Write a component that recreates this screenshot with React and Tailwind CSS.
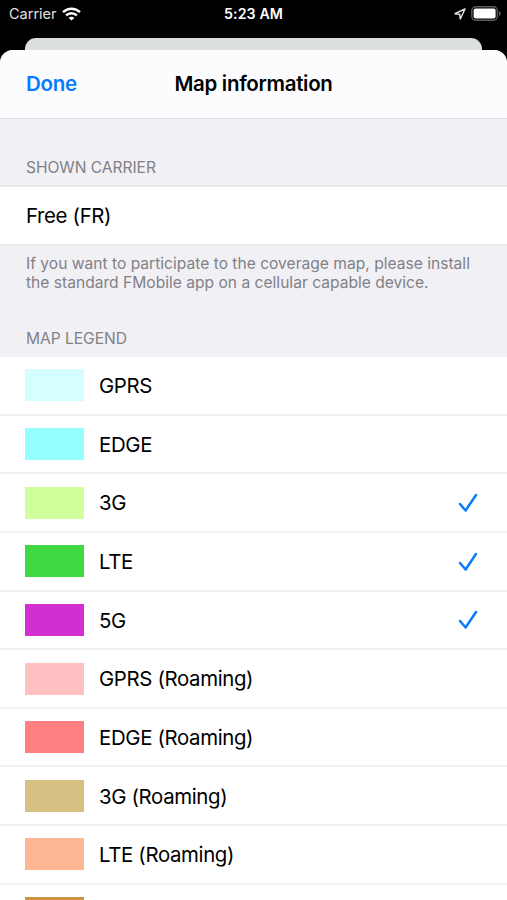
const legend = [
  { label: "GPRS", swatch: "bg-[#d5ffff]" },
  { label: "EDGE", swatch: "bg-[#96ffff]" },
  { label: "3G", swatch: "bg-[#d0ff9c]", checked: true },
  { label: "LTE", swatch: "bg-[#41d941]", checked: true },
  { label: "5G", swatch: "bg-[#d22fd0]", checked: true },
  { label: "GPRS (Roaming)", swatch: "bg-[#ffc0c2]" },
  { label: "EDGE (Roaming)", swatch: "bg-[#ff8080]" },
  { label: "3G (Roaming)", swatch: "bg-[#d7c083]" },
  { label: "LTE (Roaming)", swatch: "bg-[#ffb793]" },
  { label: "", swatch: "bg-[#d09440]" },
];

function WifiIcon() {
  return (
    <svg width="19" height="14" viewBox="0 0 19 14" fill="none" stroke="#fff" strokeWidth="2.4">
      <path d="M1 5.2C5.8.6 13.2.6 18 5.2" />
      <path d="M4.1 8.4c3-2.9 7.8-2.9 10.8 0" />
      <path d="M9.5 13.6 6.7 10.9c1.4-1.4 4.2-1.4 5.6 0Z" fill="#fff" stroke="none" />
    </svg>
  );
}

function LocationIcon() {
  return (
    <svg width="12" height="12" viewBox="0 0 12 12" fill="none" stroke="#e8e8e8" strokeWidth="1.4" strokeLinejoin="round">
      <path d="M11 1 1 5.7l4.7.6.6 4.7Z" />
    </svg>
  );
}

function BatteryIcon() {
  return (
    <svg width="31" height="15" viewBox="0 0 31 15">
      <rect x=".8" y=".8" width="25.6" height="13.4" rx="4" fill="none" stroke="#5c5c5c" strokeWidth="1.4" />
      <rect x="2.6" y="2.6" width="22" height="9.8" rx="2" fill="#fff" />
      <path d="M28 5.2c2.5.9 2.5 3.7 0 4.6Z" fill="#5c5c5c" />
    </svg>
  );
}

function Check() {
  return (
    <svg className="ml-auto mr-[29px] mt-px" width="20" height="20" viewBox="0 0 20 20" fill="none" stroke="#087bff" strokeWidth="2.5" strokeLinecap="round" strokeLinejoin="round">
      <path d="M2 11 7.6 17.5 18 2" />
    </svg>
  );
}

export default function App() {
  return (
    <div className="flex h-[900px] w-[507px] flex-col overflow-hidden bg-black font-['Inter','Liberation_Sans',sans-serif] text-black">
      <div className="grid h-[38px] shrink-0 grid-cols-3 items-start text-white">
        <div className="flex items-center gap-[5px] pl-[9px] pt-[3px]">
          <span className="text-[14.5px] leading-[21px] text-[#e0e0e0]">Carrier</span>
          <WifiIcon />
        </div>
        <div className="pt-[3px] text-center text-[14.2px] font-semibold leading-[21px] tracking-[0.1px]">5:23 AM</div>
        <div className="flex items-center justify-end gap-[5px] pr-[5px] pt-[6px]">
          <LocationIcon />
          <BatteryIcon />
        </div>
      </div>
      <div className="mx-[25px] h-[12px] shrink-0 rounded-t-[11px] bg-[#d9e0df]" />
      <div className="flex min-h-0 flex-1 flex-col overflow-hidden rounded-t-[13px] bg-[#f1f0f5]">
        <header className="grid h-[69px] shrink-0 grid-cols-[1fr_auto_1fr] items-center border-b border-[#e0e0e4] bg-[#fcfcfe] px-[26px] pt-[1px] text-[20.5px] font-semibold tracking-[-0.3px]">
          <span className="text-[#087bff]">Done</span>
          <h1>Map information</h1>
        </header>
        <h2 className="h-[68px] shrink-0 border-b-2 border-[#e8e8eb] pl-[26px] pt-[39px] text-[15.6px] leading-[20px] tracking-[-0.05px] text-[#818186]">SHOWN CARRIER</h2>
        <div className="flex h-[57px] shrink-0 items-center bg-white pl-[26px] pt-px text-[20.4px] tracking-[-0.35px]">Free (FR)</div>
        <div className="h-[84px] shrink-0 border-t-2 border-[#e9e9ec] pl-[26px] pt-[8px] text-[15.6px] leading-[19px] text-[#818186]">
          <p className="whitespace-nowrap">If you want to participate to the coverage map, please install</p>
          <p className="whitespace-nowrap">the standard FMobile app on a cellular capable device.</p>
        </div>
        <h2 className="h-[29px] shrink-0 pl-[26px] pt-px text-[15.6px] leading-[20px] tracking-[-0.05px] text-[#818186]">MAP LEGEND</h2>
        <ul className="flex flex-col">
          {legend.map((item, i) => (
            <li key={i} className="flex h-[58.65px] shrink-0 items-center border-b-2 border-[#f1f1f3] bg-white pl-[25px] text-[20.4px] tracking-[-0.35px]">
              <span className={`mr-[15px] h-[32px] w-[59px] ${item.swatch}`} />
              {item.label && <span className="pt-[2px]">{item.label}</span>}
              {item.checked && <Check />}
            </li>
          ))}
        </ul>
      </div>
    </div>
  );
}
